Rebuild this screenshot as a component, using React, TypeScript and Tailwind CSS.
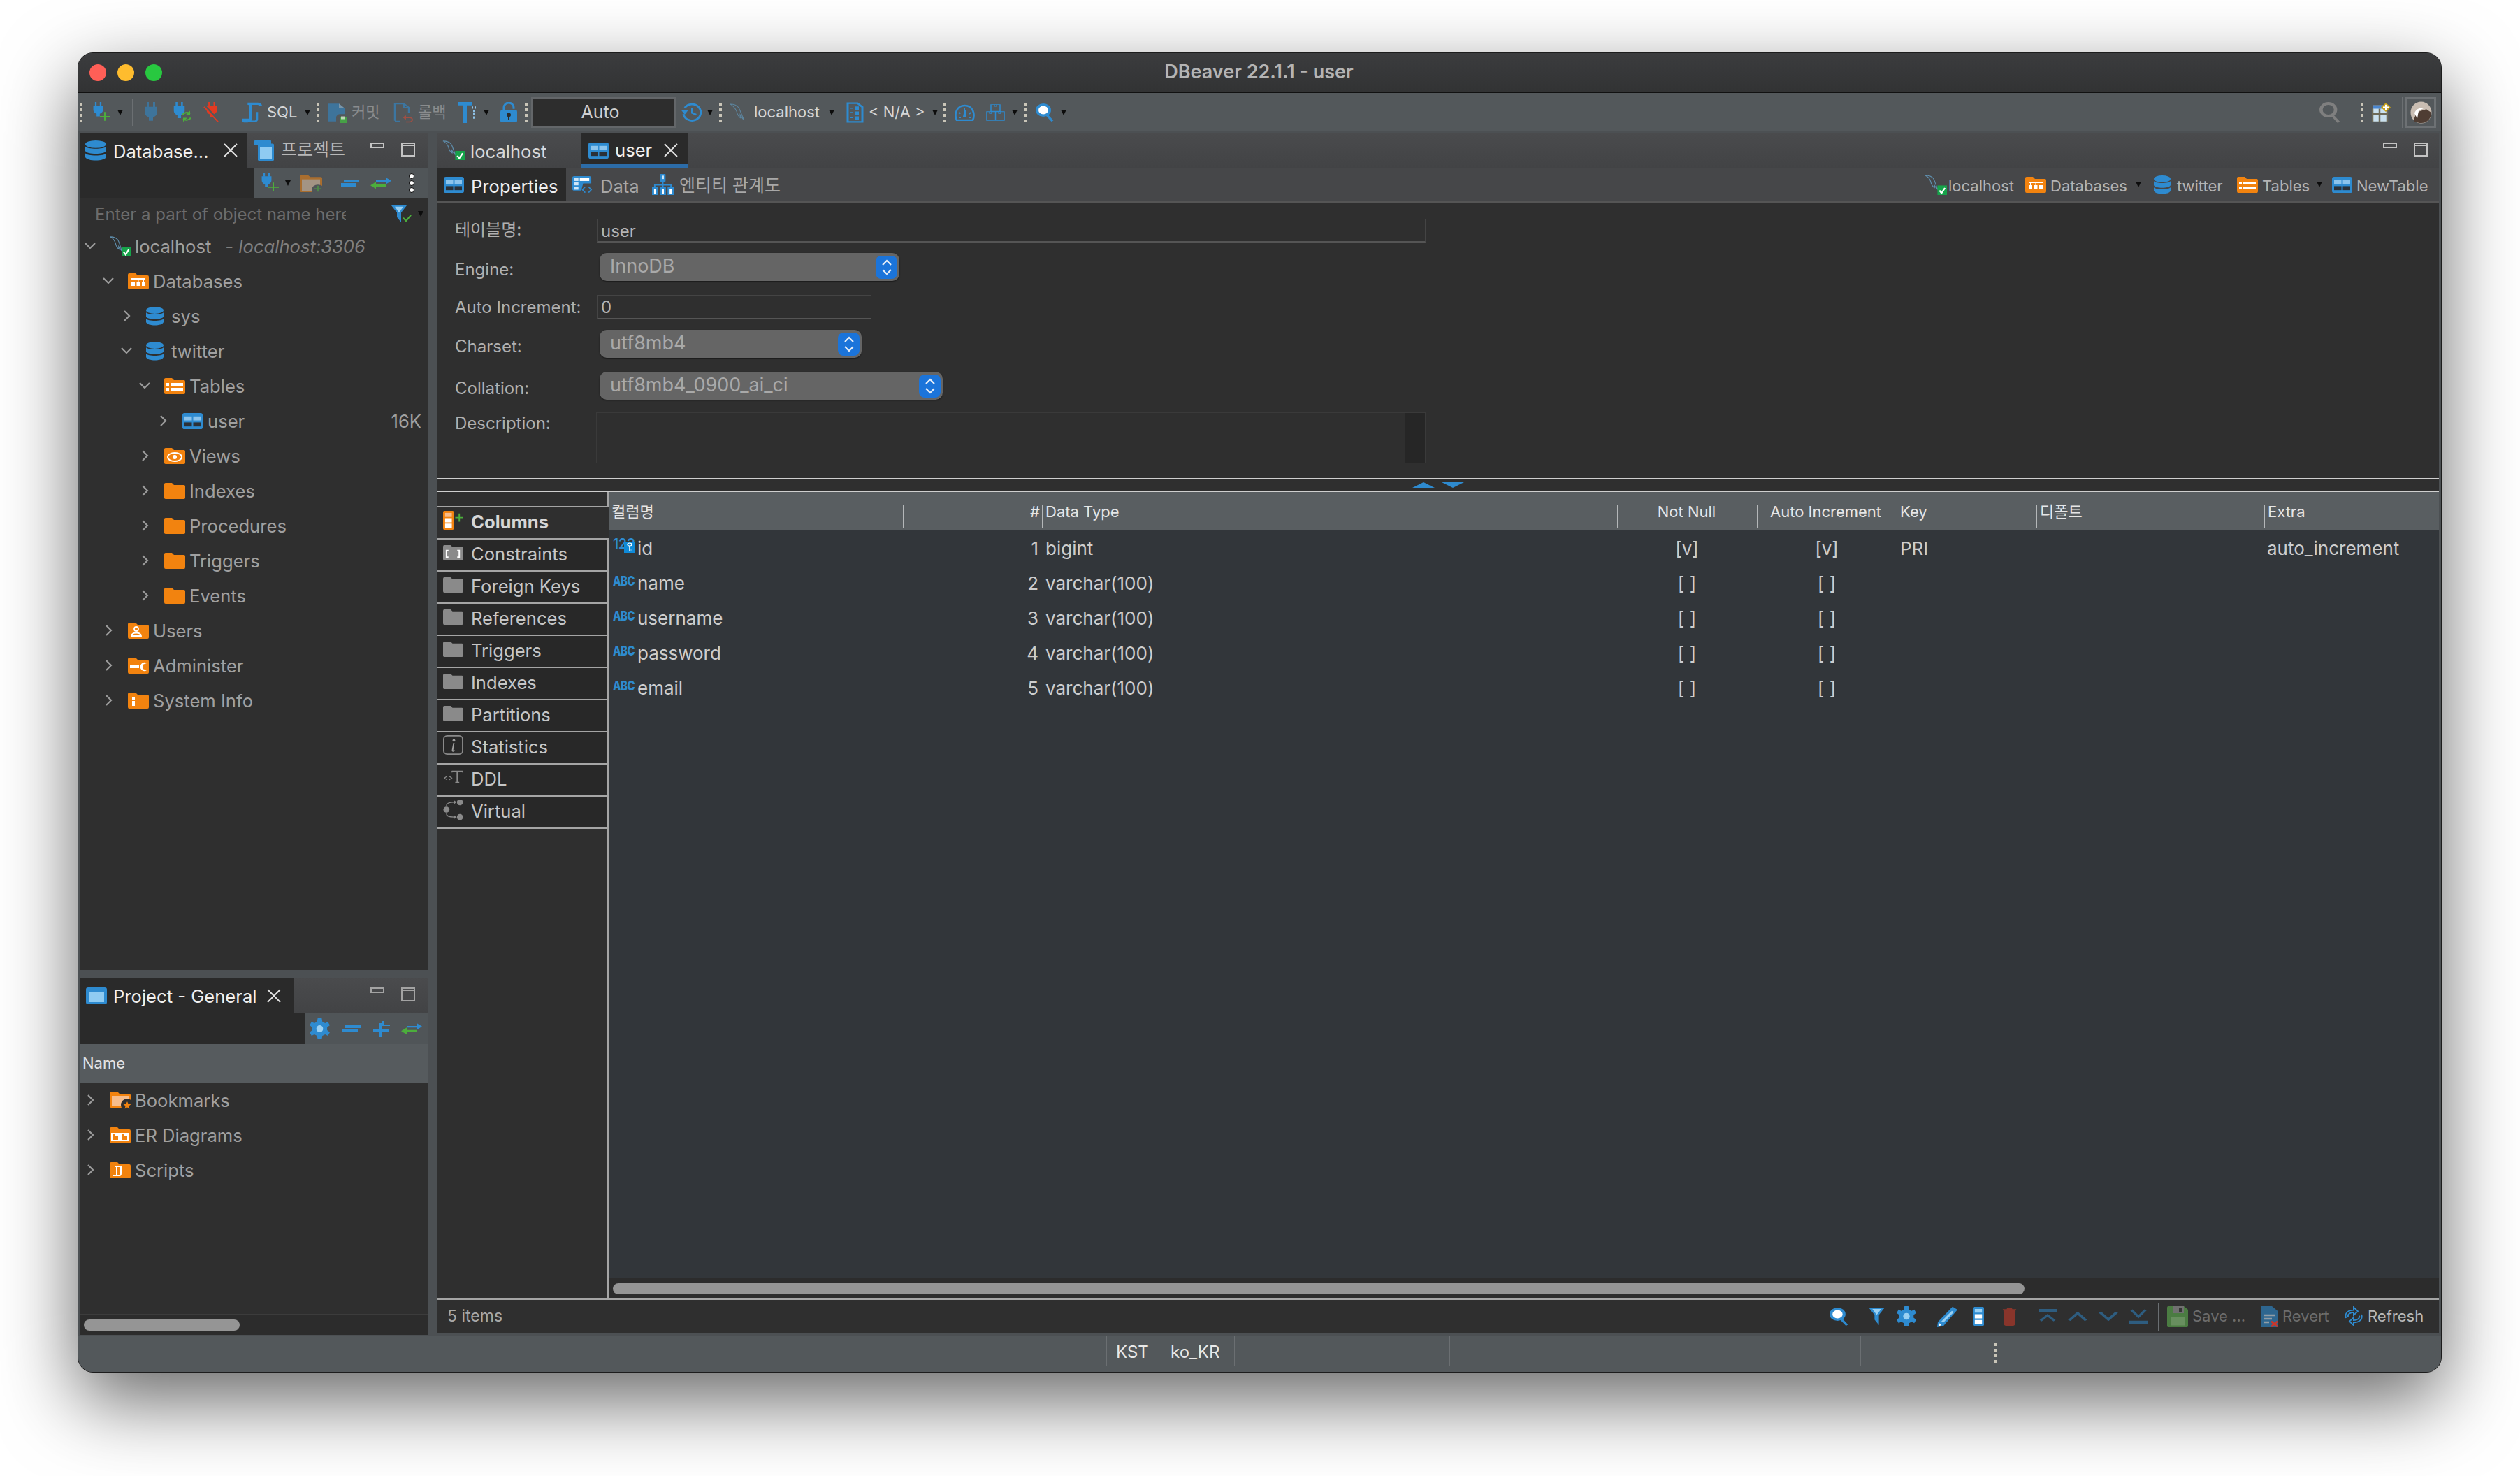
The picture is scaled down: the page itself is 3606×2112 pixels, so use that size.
import type { ReactNode } from 'react';

const BLUE = '#2e8bd0';
const ORANGE = '#f2830f';
const GREEN = '#4cae3c';

function Svg({ w, h = w, vb, cls = '', children }: { w: number; h?: number; vb: string; cls?: string; children: ReactNode }) {
  return (
    <svg width={w} height={h} viewBox={vb} preserveAspectRatio="none" className={`shrink-0 ${cls}`}>
      {children}
    </svg>
  );
}

function Grip({ cls = '' }: { cls?: string }) {
  return (
    <div className={`flex flex-col gap-[4px] w-[4px] shrink-0 ${cls}`}>
      <div className="h-[4px] bg-[#c9c5b8]" />
      <div className="h-[4px] bg-[#c9c5b8]" />
      <div className="h-[4px] bg-[#c9c5b8]" />
      <div className="h-[4px] bg-[#c9c5b8]" />
    </div>
  );
}

function Dd({ cls = '' }: { cls?: string }) {
  return (
    <Svg w={8} h={8} vb="0 0 8 8" cls={cls}>
      <path d="M0 0h8L4 8z" fill="#0c0c0c" />
    </Svg>
  );
}

function Sep({ cls = '' }: { cls?: string }) {
  return <div className={`w-px h-[40px] bg-[#6b6f72] shrink-0 ${cls}`} />;
}

function Plug({ w = 22, color = BLUE, opacity = 1 }: { w?: number; color?: string; opacity?: number }) {
  return (
    <g opacity={opacity} transform={`scale(${w / 22})`}>
      <path d="M5 0h3v9H5zM14 0h3v9h-3z" fill={color} />
      <path d="M2 8h18v9c0 5-3 8-6 9v6H8v-6c-3-1-6-4-6-9z" fill={color} />
    </g>
  );
}

function PlugAdd() {
  return (
    <Svg w={26} h={30} vb="0 0 26 36">
      <Plug w={17} />
      <path d="M18 17v15M11 25h15" stroke={GREEN} strokeWidth="2" fill="none" />
    </Svg>
  );
}

function PlugRefresh() {
  return (
    <Svg w={28} h={30} vb="0 0 28 36">
      <Plug w={19} />
      <path d="M14 22a7 7 0 0 1 11-2M26 27a7 7 0 0 1-11 2" stroke={GREEN} strokeWidth="2.4" fill="none" />
      <path d="M25 15v7h-6zM15 34v-7h6z" fill={GREEN} />
    </Svg>
  );
}

function PlugOff() {
  return (
    <Svg w={24} h={30} vb="0 0 24 36">
      <g transform="translate(3 0) scale(.82)">
        <Plug w={22} color="#e23a22" />
      </g>
      <path d="M2 6l20 26" stroke="#53585b" strokeWidth="3" />
      <path d="M1 8l20 26" stroke="#e23a22" strokeWidth="2" />
    </Svg>
  );
}

function ScriptIcon() {
  return (
    <Svg w={29} h={30} vb="0 0 28 38">
      <path d="M8 3h14a4 4 0 0 1 4 4M9 3c2 0 3 2 3 4v24a4 4 0 0 1-4 4H3a2 2 0 0 1-1-3h10" stroke={BLUE} strokeWidth="4" fill="none" />
      <path d="M8 35h10c2 0 3-2 3-4V18" stroke={BLUE} strokeWidth="3" fill="none" />
    </Svg>
  );
}

function CommitIcon() {
  return (
    <Svg w={28} h={30} vb="0 0 28 38">
      <g opacity=".55">
        <path d="M1 3h15l8 8v24H1z" fill={BLUE} />
        <path d="M16 3v8h8" fill="#9cc8e8" />
      </g>
      <path d="M12 36v-8a6 6 0 0 1 6-6h9v16H12z" fill="#53585b" />
      <path d="M17 28h10v10H17z" fill="#46a046" />
      <path d="M19 26h5v5h-5z" fill="#d6e6d0" opacity=".8" />
    </Svg>
  );
}

function RollbackIcon() {
  return (
    <Svg w={30} h={30} vb="0 0 30 38" cls="opacity-60">
      <path d="M2 34V3h13l7 7v10M15 3v7h7M2 35h8" stroke={BLUE} strokeWidth="2.5" fill="none" />
      <path d="M16 28h7a4 4 0 0 1 0 8h-5" stroke="#d24a35" strokeWidth="2" fill="none" />
      <path d="M18 24l-5 4 5 4z" fill="#d24a35" />
    </Svg>
  );
}

function TextIcon() {
  return (
    <Svg w={28} h={30} vb="0 0 28 38">
      <path d="M0 0h20v6h-7v32H8V6H0z" fill={BLUE} />
      <path d="M20 8h2v4h-2zM24 8h2v4h-2zM22 14h2v4h-2zM22 20h2v4h-2zM22 26h2v4h-2z" fill="#8fc1e6" />
    </Svg>
  );
}

function LockIcon() {
  return (
    <Svg w={24} h={29} vb="0 0 24 30">
      <path d="M5 14V8a7 7 0 0 1 14 0v2" stroke={BLUE} strokeWidth="3" fill="none" />
      <path d="M2 12h20a2 2 0 0 1 2 2v14a2 2 0 0 1-2 2H2a2 2 0 0 1-2-2V14a2 2 0 0 1 2-2z" fill={BLUE} />
      <circle cx="12" cy="19" r="3" fill="#2b2b2b" />
      <path d="M11 20h2v6h-2z" fill="#2b2b2b" />
    </Svg>
  );
}

function HistoryIcon() {
  return (
    <Svg w={29} h={27} vb="0 0 30 30">
      <path d="M5 8a13 13 0 1 1-2 10" stroke={BLUE} strokeWidth="3" fill="none" />
      <path d="M0 12h10L5 19z" fill={BLUE} />
      <path d="M16 8v8l6 3" stroke={BLUE} strokeWidth="3" fill="none" />
    </Svg>
  );
}

function Dolphin() {
  return (
    <Svg w={27} h={28} vb="0 0 27 28">
      <path d="M1 2c5 0 9 1 12 5 3 5 4 11 8 18-3-2-4-5-6-8 0 2 0 4 1 5-3-2-5-5-6-10C8 8 5 4 1 2z" fill="none" stroke="#5f8fae" strokeWidth="1.2" />
    </Svg>
  );
}

function DolphinOk({ w = 32, h = 29 }: { w?: number; h?: number }) {
  return (
    <Svg w={w} h={h} vb="0 0 33 32">
      <path d="M1 1c5 0 9 1 12 5 3 5 3 11 7 18-3-2-4-5-6-8 0 2 0 4 1 5-3-2-5-5-6-10C8 7 5 3 1 1z" fill="none" stroke="#5f8fae" strokeWidth="1.2" />
      <path d="M19 17h14v15H19z" fill="#16a34a" />
      <path d="M22 25l3 4 5-8" stroke="#fff" strokeWidth="2.4" fill="none" />
    </Svg>
  );
}

function FileIcon() {
  return (
    <Svg w={25} h={30} vb="0 0 25 38">
      <path d="M2 2h14l7 7v27H2z" stroke={BLUE} strokeWidth="3" fill="none" />
      <path d="M5 10h5v2H5zM13 8h5v6h-5zM5 18h5v2H5zM13 17h5v6h-5zM5 27h5v2H5zM13 26h5v6h-5z" fill={BLUE} />
    </Svg>
  );
}

function GaugeIcon() {
  return (
    <Svg w={31} h={24} vb="0 0 31 24">
      <path d="M4 23C0 14 4 2 15.500 2S31 14 27 23z" stroke={BLUE} strokeWidth="2.6" fill="none" />
      <path d="M16 9l-2 9h3zM7 12l2 2M24 12l-2 2M15 5v3M7 19h3M21 19h3" stroke={BLUE} strokeWidth="2" fill={BLUE} />
    </Svg>
  );
}

function BoxesIcon() {
  return (
    <Svg w={27} h={24} vb="0 0 27 38">
      <path d="M7 1h13v15H7zM1 17h12.500v20H1zM13.500 17H26v20H13.500z" stroke={BLUE} strokeWidth="1.5" fill="none" />
      <path d="M12 1v4h3V1M5 17v4h3v-4M18 17v4h3v-4" stroke={BLUE} strokeWidth="1.2" fill="none" />
    </Svg>
  );
}

function SearchIcon({ w = 26, h = 26, color = BLUE, fill = '#fff' }: { w?: number; h?: number; color?: string; fill?: string }) {
  return (
    <Svg w={w} h={h} vb="0 0 26 30">
      <ellipse cx="11" cy="11" rx="9" ry="9" fill={fill} stroke={color} strokeWidth="4" />
      <path d="M16 19l8 10" stroke={color} strokeWidth="3.500" />
    </Svg>
  );
}

function FilterIcon({ check = false, w = 32, h = 26 }: { check?: boolean; w?: number; h?: number }) {
  return (
    <Svg w={w} h={h} vb={check ? '0 0 32 28' : '0 0 24 28'}>
      <path d="M1 1h22L15 12v15l-6-8v-7z" fill={BLUE} />
      <path d="M6 3h12l-6 9z" fill="#9ad0f2" />
      {check && <path d="M18 20l4 5 7-9" stroke={GREEN} strokeWidth="2.2" fill="none" />}
    </Svg>
  );
}

function Collapse() {
  return (
    <Svg w={26} h={10} vb="0 0 26 10">
      <path d="M4 0h22v4h-2v0H4zM0 5h22v5H0z" fill={BLUE} />
    </Svg>
  );
}

function SwapArrows() {
  return (
    <Svg w={30} h={18} vb="0 0 30 22">
      <path d="M8 6h14V1l8 6-8 6V9H8z" fill={BLUE} />
      <path d="M22 13H8V9l-8 6 8 6v-4h14z" fill={GREEN} />
    </Svg>
  );
}

function Gear({ w = 28, h = 29 }: { w?: number; h?: number }) {
  return (
    <Svg w={w} h={h} vb="0 0 30 30">
      <path d="M12 0h6l1 5 4 2 4-2 3 5-4 3v4l4 3-3 5-4-2-4 2-1 5h-6l-1-5-4-2-4 2-3-5 4-3v-4L0 10l3-5 4 2 4-2z" fill={BLUE} />
      <circle cx="15" cy="15" r="5" fill="#9ad0f2" />
    </Svg>
  );
}

function TableBlue({ w = 29 }: { w?: number }) {
  return (
    <Svg w={w} h={Math.round(w * 0.8)} vb="0 0 29 24">
      <rect width="29" height="24" rx="3" fill={BLUE} />
      <rect x="3" y="5" width="10.500" height="6" fill="#8cc4ec" />
      <rect x="15.500" y="5" width="10.500" height="6" fill="#8cc4ec" />
      <rect x="3" y="14" width="10.500" height="6" fill="#2b3138" />
      <rect x="15.500" y="14" width="10.500" height="6" fill="#2b3138" />
    </Svg>
  );
}

function DataIcon() {
  return (
    <Svg w={29} h={25} vb="0 0 30 36">
      <rect width="28" height="30" rx="3" fill={BLUE} />
      <rect x="3" y="4" width="6" height="6" fill="#cfe6f7" />
      <rect x="11" y="4" width="14" height="6" fill="#fff" />
      <rect x="3" y="13" width="6" height="6" fill="#cfe6f7" />
      <rect x="3" y="22" width="6" height="6" fill="#cfe6f7" />
      <path d="M16 15h14v21H12z" fill="#464749" />
      <path d="M19 22l-4 6 4 6M24 22l4 6-4 6" stroke={BLUE} strokeWidth="2" fill="none" />
    </Svg>
  );
}

function ErdIcon() {
  return (
    <Svg w={31} h={30} vb="0 0 32 38">
      <rect x="12" y="0" width="8" height="14" rx="1" fill={BLUE} />
      <rect x="14.500" y="3" width="3" height="6" fill="#cfe6f7" />
      <path d="M16 14v6M4 24v-4h24v4M16 20v4" stroke={BLUE} strokeWidth="2" fill="none" />
      <path d="M0 24h9v14H0zM11.500 24h9v14h-9zM23 24h9v14h-9z" fill={BLUE} />
      <path d="M3 28h3v8H3zM14.500 28h3v8h-3zM26 28h3v8h-3z" fill="#fff" />
    </Svg>
  );
}

function Db({ w = 25, h = 27 }: { w?: number; h?: number }) {
  return (
    <Svg w={w} h={h} vb="0 0 25 27">
      <ellipse cx="12.500" cy="5" rx="12.500" ry="5" fill={BLUE} />
      <path d="M0 8c2 4 23 4 25 0v6c-2 5-23 5-25 0z" fill={BLUE} />
      <path d="M0 17c2 4 23 4 25 0v5c-2 6-23 6-25 0z" fill={BLUE} />
    </Svg>
  );
}

const FOLDER = 'M0 3a2 2 0 0 1 2-2h9l3 3h14a2 2 0 0 1 2 2v16a2 2 0 0 1-2 2H2a2 2 0 0 1-2-2z';

function Folder({ w = 30, h = 24, color = ORANGE, children }: { w?: number; h?: number; color?: string; children?: ReactNode }) {
  return (
    <Svg w={w} h={h} vb="0 0 30 24">
      <path d={FOLDER} fill={color} />
      {children}
    </Svg>
  );
}

const DatabasesIcon = () => (
  <Folder>
    <path d="M5 8h20v2H5zM5 13h5v6H5zM12.500 13h5v6h-5zM20 13h5v6h-5z" fill="#fff" />
    <path d="M7 10h1v3H7zM14.500 10h1v3h-1zM22 10h1v3h-1z" fill="#fff" />
  </Folder>
);
const TablesIcon = () => (
  <Folder>
    <path d="M3 8h4v4H3zM9 8h18v4H9zM3 15h4v4H3zM9 15h18v4H9z" fill="#fff" />
  </Folder>
);
const ViewsIcon = () => (
  <Folder>
    <ellipse cx="15" cy="14" rx="10" ry="6" fill="none" stroke="#fff" strokeWidth="2" />
    <circle cx="15" cy="14" r="3" fill="#fff" />
  </Folder>
);
const UsersIcon = () => (
  <Folder>
    <circle cx="12" cy="10" r="3" fill="none" stroke="#fff" strokeWidth="1.800" />
    <path d="M5 20c0-6 14-6 14 0z" fill="none" stroke="#fff" strokeWidth="1.800" />
  </Folder>
);
const AdminIcon = () => (
  <Folder>
    <path d="M3 12h13v4H3z" fill="#fff" />
    <path d="M27 9a6 6 0 1 0 0 10l-6-2v-6z" fill="#fff" />
  </Folder>
);
const InfoIcon = () => (
  <Folder>
    <path d="M6 8h4v3H6zM6 13h4v7H6z" fill="#fff" />
  </Folder>
);
const BookmarksIcon = () => (
  <Svg w={32} h={26} vb="0 0 32 26">
    <path d={FOLDER} fill={ORANGE} />
    <path d="M3 7h24v14H3z" fill="#f7bd8c" />
    <circle cx="25" cy="20" r="9" fill="#2f2f2f" />
    <path d="M25 15l1.600 3.600 3.900.4-3 2.600.9 3.800-3.400-2-3.400 2 .9-3.800-3-2.600 3.900-.4z" fill={ORANGE} />
  </Svg>
);
const ErIcon = () => (
  <Folder>
    <path d="M3 10h10v10H3zM16 10h10v10H16z" fill="none" stroke="#fff" strokeWidth="2" />
    <path d="M8 9h5v4H8zM21 9h5v4h-5z" fill="#fff" />
  </Folder>
);
const ScriptsIcon = () => (
  <Folder>
    <path d="M8 7h10M10 7v12M5 20h9c2 0 2-2 2-3V8" fill="none" stroke="#fff" strokeWidth="2" />
  </Folder>
);

function Chev({ open }: { open: boolean }) {
  return (
    <Svg w={16} h={16} vb="0 0 16 16">
      {open ? (
        <path d="M1 4l7 7 7-7" stroke="#9b9b9b" strokeWidth="2.200" fill="none" />
      ) : (
        <path d="M5 1l7 7-7 7" stroke="#9b9b9b" strokeWidth="2.200" fill="none" />
      )}
    </Svg>
  );
}

function MinMax({ cls = '', dim = false }: { cls?: string; dim?: boolean }) {
  const c = dim ? 'border-[#a3a3a3]' : 'border-[#c4c4c4]';
  return (
    <div className={`flex shrink-0 ${cls}`}>
      <div className={`w-[20px] h-[8px] border-2 ${c}`} />
      <div className={`ml-[24px] w-[20px] h-[20px] border-2 ${c} flex flex-col`}>
        <div className={`h-[3px] border-b-2 ${c}`} />
      </div>
    </div>
  );
}

function CloseX({ cls = '' }: { cls?: string }) {
  return (
    <Svg w={20} h={20} vb="0 0 20 20" cls={cls}>
      <path d="M1 1l18 18M19 1L1 19" stroke="#e6e6e6" strokeWidth="1.800" />
    </Svg>
  );
}

const INDENT = ['pl-[7px]', 'pl-[33px]', 'pl-[59px]', 'pl-[85px]', 'pl-[111px]'];

function TreeRow({ level, open, icon, label, note, right }: { level: number; open?: boolean; icon: ReactNode; label: string; note?: string; right?: string }) {
  return (
    <div className={`flex items-center h-[50px] text-[25.6px] text-[#a0a0a0] ${INDENT[level]}`}>
      <Chev open={!!open} />
      <div className="ml-[20px] w-[36px] flex items-center shrink-0">{icon}</div>
      <span className="whitespace-nowrap pt-[2px]">{label}</span>
      {note && <span className="ml-[20px] pt-[2px] italic text-[#7f7f7f] whitespace-nowrap">- {note}</span>}
      {right && <span className="ml-auto pr-[9px] pt-[2px]">{right}</span>}
    </div>
  );
}

function DatabasePane() {
  return (
    <div className="h-[1198px] flex flex-col bg-[#2f2f2f] shrink-0">
      <div className="h-[50px] flex bg-gradient-to-b from-[#4a4b4d] to-[#424345] shrink-0">
        <div className="w-[240px] bg-[#2a2a2a] flex items-center pl-[8px] text-[25.6px] text-[#f0f0f0]">
          <Db w={30} h={29} />
          <span className="ml-[10px] w-[136px] whitespace-nowrap pt-[4px]">Database...</span>
          <CloseX cls="ml-[22px]" />
        </div>
        <div className="flex items-center pl-[10px] text-[25px] text-[#b8b8b8] flex-1">
          <Svg w={28} h={30} vb="0 0 28 38">
            <path d="M0 3a3 3 0 0 1 3-3h18a3 3 0 0 1 3 3v6H0z" fill={BLUE} />
            <rect x="5" y="7" width="23" height="31" rx="2" fill={BLUE} />
            <rect x="8" y="13" width="17" height="22" fill="#8fcbf2" />
          </Svg>
          <span className="ml-[10px] w-[88px] whitespace-nowrap">프로젝트</span>
          <MinMax cls="ml-[40px] self-start mt-[14px]" />
        </div>
      </div>
      <div className="h-[44px] flex shrink-0">
        <div className="w-[250px] bg-[#2a2a2a]" />
        <div className="flex-1 bg-[#505558] flex items-center">
          <div className="ml-[9px]"><PlugAdd /></div>
          <Dd cls="ml-[9px]" />
          <Svg w={32} h={25} vb="0 0 32 30" cls="ml-[13px] opacity-55">
            <path d="M0 3a2 2 0 0 1 2-2h10l3 3h15a2 2 0 0 1 2 2v22a2 2 0 0 1-2 2H2a2 2 0 0 1-2-2z" fill={ORANGE} />
            <path d="M3 8h26v20H3z" fill="#e8c8a8" />
            <circle cx="26" cy="26" r="9" fill="#505558" />
            <path d="M26 19v10M21 24h10" stroke={GREEN} strokeWidth="2" />
          </Svg>
          <div className="ml-[12px] w-px h-[44px] bg-[#6b6f72]" />
          <div className="ml-[14px]"><Collapse /></div>
          <div className="ml-[16px]"><SwapArrows /></div>
          <div className="ml-[25px] flex flex-col gap-[2px]">
            <div className="w-[8px] h-[8px] rounded-full bg-white border border-black" />
            <div className="w-[8px] h-[8px] rounded-full bg-white border border-black" />
            <div className="w-[8px] h-[8px] rounded-full bg-white border border-black" />
          </div>
        </div>
      </div>
      <div className="h-[43px] flex items-center shrink-0 pl-[22px] text-[24px] text-[#6c6c6c]">
        <span className="w-[359px] overflow-hidden whitespace-nowrap pt-[2px]">Enter a part of object name here</span>
        <div className="ml-[64px]"><FilterIcon check /></div>
        <Dd cls="ml-[7px]" />
      </div>
      <TreeRow level={0} open icon={<DolphinOk w={30} />} label="localhost" note="localhost:3306" />
      <TreeRow level={1} open icon={<DatabasesIcon />} label="Databases" />
      <TreeRow level={2} icon={<Db />} label="sys" />
      <TreeRow level={2} open icon={<Db />} label="twitter" />
      <TreeRow level={3} open icon={<TablesIcon />} label="Tables" />
      <TreeRow level={4} icon={<TableBlue />} label="user" right="16K" />
      <TreeRow level={3} icon={<ViewsIcon />} label="Views" />
      <TreeRow level={3} icon={<Folder />} label="Indexes" />
      <TreeRow level={3} icon={<Folder />} label="Procedures" />
      <TreeRow level={3} icon={<Folder />} label="Triggers" />
      <TreeRow level={3} icon={<Folder />} label="Events" />
      <TreeRow level={1} icon={<UsersIcon />} label="Users" />
      <TreeRow level={1} icon={<AdminIcon />} label="Administer" />
      <TreeRow level={1} icon={<InfoIcon />} label="System Info" />
    </div>
  );
}

function ProjectPane() {
  return (
    <div className="flex-1 flex flex-col bg-[#2f2f2f] mt-[11px] mb-[1px]">
      <div className="h-[51px] flex bg-gradient-to-b from-[#4a4b4d] to-[#424345] shrink-0">
        <div className="w-[306px] bg-[#2a2a2a] flex items-center pl-[9px] text-[25.6px] text-[#f0f0f0]">
          <Svg w={30} h={24} vb="0 0 30 24">
            <rect width="30" height="24" rx="3" fill={BLUE} />
            <rect x="4" y="6" width="22" height="15" fill="#8fcbf2" />
          </Svg>
          <span className="ml-[9px] w-[204px] whitespace-nowrap pt-[4px]">Project - General</span>
          <CloseX cls="ml-[16px]" />
        </div>
        <MinMax cls="ml-[110px] mt-[14px] self-start" dim />
      </div>
      <div className="h-[44px] flex shrink-0">
        <div className="w-[322px] bg-[#2a2a2a]" />
        <div className="flex-1 bg-[#505558] flex items-center">
          <div className="ml-[7px]"><Gear w={29} h={30} /></div>
          <div className="ml-[18px]"><Collapse /></div>
          <Svg w={26} h={24} vb="0 0 26 24" cls="ml-[18px]">
            <path d="M0 12h22v4H0zM9 4h4v20H9z" fill={BLUE} />
            <path d="M14 1v6h10" stroke={BLUE} strokeWidth="2" fill="none" />
          </Svg>
          <div className="ml-[14px]"><SwapArrows /></div>
        </div>
      </div>
      <div className="h-[55px] bg-[#565b5e] flex items-center pl-[4px] text-[22px] text-[#e4e4e4] shrink-0">Name</div>
      <TreeRow level={0} icon={<BookmarksIcon />} label="Bookmarks" />
      <TreeRow level={0} icon={<ErIcon />} label="ER Diagrams" />
      <TreeRow level={0} icon={<ScriptsIcon />} label="Scripts" />
      <div className="mt-auto h-[30px] border-t border-[#3c3c3c] bg-[#2c2c2c] pt-[7px] pl-[6px]">
        <div className="w-[223px] h-[16px] rounded-full bg-[#959595]" />
      </div>
    </div>
  );
}

function Select({ label, cls, text, mt }: { label: string; cls: string; text: string; mt: string }) {
  return (
    <div className={`flex items-center h-[40px] ${mt}`}>
      <span className="w-[207px] mt-[8px] text-[#b0b0b0]">{label}</span>
      <div className={`h-[40px] rounded-[10px] bg-[#656565] flex items-center justify-between pl-[15px] pr-[3px] text-[27px] text-[#a9a9a9] shadow-[0_1px_2px_rgba(0,0,0,.5)] ${cls}`}>
        <span className="-mt-[2px]">{text}</span>
        <div className="w-[31px] h-[33px] rounded-[8px] bg-[#1b74da] flex items-center justify-center">
          <Svg w={16} h={25} vb="0 0 16 25">
            <path d="M2 9l6-6 6 6M2 16l6 6 6-6" stroke="#e6eef8" strokeWidth="2.200" fill="none" />
          </Svg>
        </div>
      </div>
    </div>
  );
}

function FormPanel() {
  return (
    <div className="h-[394px] pl-[25px] pt-[23px] flex flex-col text-[24px] shrink-0">
      <div className="flex h-[34px] items-center">
        <span className="w-[203px] -mt-[2px] text-[#b0b0b0]">테이블명:</span>
        <div className="w-[1186px] h-[34px] border border-[#444] border-b-2 border-b-[#555] pl-[5px] pt-[2px] flex items-center text-[#b5b5b5]">user</div>
      </div>
      <Select mt="mt-[15px]" label="Engine:" cls="w-[429px]" text="InnoDB" />
      <div className="flex h-[35px] items-center mt-[20px]">
        <span className="w-[203px] text-[#b0b0b0] mt-[1px]">Auto Increment:</span>
        <div className="w-[393px] h-[35px] border border-[#444] border-b-2 border-b-[#555] pl-[5px] pt-[2px] flex items-center text-[#b5b5b5]">0</div>
      </div>
      <Select mt="mt-[15px]" label="Charset:" cls="w-[375px]" text="utf8mb4" />
      <Select mt="mt-[20px]" label="Collation:" cls="w-[491px]" text="utf8mb4_0900_ai_ci" />
      <div className="flex mt-[18px]">
        <span className="w-[202px] h-[40px] -mt-[2px] text-[#b0b0b0]">Description:</span>
        <div className="w-[1187px] h-[73px] border border-[#3a3a3a] flex justify-end">
          <div className="w-[28px] bg-[#262626]" />
        </div>
      </div>
    </div>
  );
}

function TabItem({ icon, label, active }: { icon: ReactNode; label: string; active?: boolean }) {
  return (
    <div className={`h-[46px] w-[245px] border-t-2 border-[#a5a5a5] flex items-center pl-[8px] pb-[2px] text-[25.6px] ${active ? 'bg-[#2f2f2f] text-[#d6d6d6] font-bold' : 'bg-[#282828] text-[#c6c6c6] border-r-2'}`}>
      <div className="w-[40px] -mt-[6px] shrink-0 flex">{icon}</div>
      <span className="whitespace-nowrap">{label}</span>
    </div>
  );
}

const COLS = 'grid grid-cols-[421px_199px_823px_200px_200px_200px_326px_251px]';

const ROWS: { icon: 'num' | 'abc'; name: string; n: number; type: string; nn: string; ai: string; key?: string; extra?: string }[] = [
  { icon: 'num', name: 'id', n: 1, type: 'bigint', nn: '[v]', ai: '[v]', key: 'PRI', extra: 'auto_increment' },
  { icon: 'abc', name: 'name', n: 2, type: 'varchar(100)', nn: '[ ]', ai: '[ ]' },
  { icon: 'abc', name: 'username', n: 3, type: 'varchar(100)', nn: '[ ]', ai: '[ ]' },
  { icon: 'abc', name: 'password', n: 4, type: 'varchar(100)', nn: '[ ]', ai: '[ ]' },
  { icon: 'abc', name: 'email', n: 5, type: 'varchar(100)', nn: '[ ]', ai: '[ ]' },
];

function HeadCell({ children, cls = '' }: { children?: ReactNode; cls?: string }) {
  return <div className={`h-[34px] border-l-[1.5px] border-[#b4b7b9] pl-[4px] whitespace-nowrap leading-[20px] ${cls}`}>{children}</div>;
}

function ColumnsTable() {
  return (
    <div className="flex-1 flex flex-col bg-[#32363a] min-w-0">
      <div className={`h-[55px] bg-[#595e61] pt-[18px] text-[22px] text-[#e6e6e6] shrink-0 ${COLS}`}>
        <div className="h-[34px] pl-[4px] leading-[20px]">컬럼명</div>
        <HeadCell cls="text-right pr-[3px]">#</HeadCell>
        <HeadCell>Data Type</HeadCell>
        <HeadCell cls="text-center pr-[6px]">Not Null</HeadCell>
        <HeadCell cls="text-center pr-[8px]">Auto Increment</HeadCell>
        <HeadCell>Key</HeadCell>
        <HeadCell>디폴트</HeadCell>
        <HeadCell>Extra</HeadCell>
      </div>
      <div className="text-[26px] text-[#cdcdcd]">
        {ROWS.map((r) => (
          <div key={r.name} className={`h-[50px] items-center ${COLS}`}>
            <div className="flex items-center pl-[6px]">
              {r.icon === 'abc' ? (
                <span className="w-[35px] -mt-[6px] text-[15px] leading-none font-extrabold text-[#2e8bd0] tracking-[-0.5px] origin-left scale-y-[1.25] shrink-0">ABC</span>
              ) : (
                <span className="w-[35px] -mt-[12px] text-[20px] leading-none font-medium text-[#2e8bd0] tracking-[-0.5px] shrink-0 relative">
                  123
                  <Svg w={16} h={16} vb="0 0 16 24" cls="absolute left-[16px] top-[7px]">
                    <rect width="16" height="24" fill="#0f8ad8" />
                    <circle cx="8" cy="6" r="3" fill="none" stroke="#fff" strokeWidth="1.500" />
                    <path d="M8 9v12M8 16h3M8 20h3" stroke="#fff" strokeWidth="1.500" />
                  </Svg>
                </span>
              )}
              <span>{r.name}</span>
            </div>
            <div className="text-right pr-[5px]">{r.n}</div>
            <div className="pl-[5px]">{r.type}</div>
            <div className="text-center">{r.nn}</div>
            <div className="text-center">{r.ai}</div>
            <div className="pl-[5px]">{r.key}</div>
            <div />
            <div className="pl-[4px]">{r.extra}</div>
          </div>
        ))}
      </div>
      <div className="mt-auto h-[30px] bg-[#2c2c2c] border-t border-[#3c3c3c] pt-[7px] pl-[6px] shrink-0">
        <div className="w-[2020px] h-[16px] rounded-full bg-[#959595]" />
      </div>
    </div>
  );
}

function FolderGray() {
  return <Folder w={29} h={23} color="#8a8a8a" />;
}

function BottomBar() {
  return (
    <div className="h-[47px] flex items-center bg-[#2f2f2f] text-[22px] shrink-0">
      <span className="ml-[14px] text-[#a8a8a8] text-[23px]">5 items</span>
      <div className="ml-auto flex items-center">
        <SearchIcon w={27} h={26} />
        <div className="ml-[28px]"><FilterIcon w={25} h={27} /></div>
        <div className="ml-[16px]"><Gear /></div>
        <Sep cls="ml-[18px]" />
        <Svg w={30} h={30} vb="0 0 30 36" cls="ml-[11px]">
          <path d="M22 1l7 5L9 34l-9 2 1-9z" fill={BLUE} />
          <path d="M21 8l3 2L9 28l-3-2z" fill="#9ad0f2" />
          <path d="M2 35l1-6 3 3z" fill="#fff" />
        </Svg>
        <Svg w={16} h={27} vb="0 0 17 36" cls="ml-[21px]">
          <rect width="17" height="36" rx="2" fill={BLUE} />
          <rect x="3" y="4" width="11" height="7" fill="#9ad0f2" />
          <rect x="3" y="14" width="11" height="8" fill="#fff" />
          <rect x="3" y="25" width="11" height="8" fill="#fff" />
        </Svg>
        <Svg w={21} h={27} vb="0 0 23 34" cls="ml-[26px] opacity-55">
          <path d="M2 6h19l-1 25a3 3 0 0 1-3 3H6a3 3 0 0 1-3-3zM8 2h7l1 2h6v2H1V4h6z" fill="#d33b28" />
        </Svg>
        <Sep cls="ml-[17px]" />
        <Svg w={26} h={21} vb="0 0 26 30" cls="ml-[13px] opacity-50">
          <path d="M0 0h26v4H0zM3 24l10-11 10 11" fill="none" stroke={BLUE} strokeWidth="4" />
        </Svg>
        <Svg w={28} h={13} vb="0 0 28 20" cls="ml-[16px] opacity-50"><path d="M2 19L14 3l12 16" fill="none" stroke={BLUE} strokeWidth="4.500" /></Svg>
        <Svg w={28} h={13} vb="0 0 28 20" cls="ml-[16px] opacity-50"><path d="M2 1l12 16L26 1" fill="none" stroke={BLUE} strokeWidth="4.500" /></Svg>
        <Svg w={26} h={21} vb="0 0 26 30" cls="ml-[16px] opacity-50">
          <path d="M0 26h26v4H0zM3 2l10 14L23 2" fill="none" stroke={BLUE} strokeWidth="4" />
        </Svg>
        <Sep cls="ml-[15px]" />
        <Svg w={30} h={30} vb="0 0 30 36" cls="ml-[12px] opacity-60">
          <path d="M0 2a2 2 0 0 1 2-2h22l6 6v28a2 2 0 0 1-2 2H2a2 2 0 0 1-2-2z" fill="#5fb04f" />
          <path d="M8 0h16v12H8z" fill="#9c9c9c" />
          <path d="M17 3h4v7h-4z" fill="#3c3c3c" />
          <path d="M5 18h20v15H5z" fill="#8fd07f" />
        </Svg>
        <span className="ml-[6px] w-[76px] whitespace-nowrap text-[#6c6c6c]">Save ...</span>
        <Svg w={26} h={30} vb="0 0 26 36" cls="ml-[22px]">
          <g opacity=".6">
            <path d="M0 0h16l9 9v27H0z" fill={BLUE} />
            <path d="M4 14h16v3H4zM4 20h12v3H4zM4 26h8v3H4z" fill="#d5e8f6" />
          </g>
          <path d="M15 26l9 9M24 26l-9 9" stroke="#c9362a" strokeWidth="3" />
        </Svg>
        <span className="ml-[5px] w-[68px] whitespace-nowrap text-[#6c6c6c]">Revert</span>
        <Svg w={28} h={29} vb="0 0 28 36" cls="ml-[20px]">
          <path d="M3 21C0 11 8 7 14 7V2l6 7-6 7v-5c-5 0-9 3-8 8M25 15c3 10-5 14-11 14v5l-6-7 6-7v5c5 0 9-3 8-8" fill="none" stroke={BLUE} strokeWidth="2" />
        </Svg>
        <span className="ml-[6px] w-[81px] mr-[21px] whitespace-nowrap text-[#b8b8b8]">Refresh</span>
      </div>
    </div>
  );
}

function EditorPane() {
  return (
    <div className="w-[2864px] h-[1717px] flex flex-col shrink-0 mt-[2px]">
      <div className="h-[50px] flex bg-gradient-to-b from-[#4a4b4d] to-[#424345] shrink-0">
        <div className="w-[206px] flex items-center pl-[7px] text-[25.6px] text-[#d8d8d8]">
          <DolphinOk h={28} />
          <span className="ml-[8px] whitespace-nowrap pt-[4px]">localhost</span>
        </div>
        <div className="w-[152px] bg-[#2a2a2a] border-b-[6px] border-[#2c6ca8] flex items-center pl-[10px] text-[25.6px] text-[#f0f0f0] pt-[6px]">
          <TableBlue w={29} />
          <span className="ml-[9px] w-[54px]">user</span>
          <CloseX cls="ml-[16px]" />
        </div>
        <MinMax cls="ml-auto mr-[16px] mt-[14px] self-start" />
      </div>
      <div className="h-[50px] flex items-center bg-[#464749] border-b-2 border-[#555] shrink-0 text-[25.6px]">
        <div className="w-[184px] h-full bg-[#2a2a2a] flex items-center pl-[9px] text-[#f0f0f0]">
          <TableBlue w={29} />
          <span className="ml-[10px] whitespace-nowrap pt-[7px]">Properties</span>
        </div>
        <div className="ml-[9px]"><DataIcon /></div>
        <span className="ml-[11px] w-[55px] text-[#a8a8a8] pt-[7px]">Data</span>
        <div className="ml-[19px]"><ErdIcon /></div>
        <span className="ml-[8px] whitespace-nowrap text-[25px] text-[#a8a8a8] pt-[4px]">엔티티 관계도</span>
        <div className="ml-auto flex items-center text-[22px] text-[#b4b4b4] pr-[19px]">
          <DolphinOk />
          <span className="ml-[2px] w-[94px] whitespace-nowrap pt-[4px]">localhost</span>
          <div className="ml-[16px]"><DatabasesIcon /></div>
          <span className="ml-[6px] w-[110px] whitespace-nowrap pt-[4px]">Databases</span>
          <Dd cls="ml-[12px]" />
          <div className="ml-[18px]"><Db h={27} w={24} /></div>
          <span className="ml-[9px] w-[67px] whitespace-nowrap pt-[4px]">twitter</span>
          <div className="ml-[19px]"><TablesIcon /></div>
          <span className="ml-[6px] w-[66px] whitespace-nowrap pt-[4px]">Tables</span>
          <Dd cls="ml-[12px]" />
          <div className="ml-[14px]"><TableBlue /></div>
          <span className="ml-[6px] w-[99px] whitespace-nowrap pt-[4px]">NewTable</span>
        </div>
      </div>
      <div className="flex-1 flex flex-col bg-[#2f2f2f] min-h-0">
        <FormPanel />
        <div className="h-[20px] border-y-2 border-[#cfcfcf] flex items-center pl-[1395px] gap-[10px] shrink-0">
          <Svg w={32} h={8} vb="0 0 32 8"><path d="M0 8L16 0l16 8z" fill={BLUE} /></Svg>
          <Svg w={32} h={8} vb="0 0 32 8"><path d="M0 0h32L16 8z" fill={BLUE} /></Svg>
        </div>
        <div className="flex-1 flex min-h-0">
          <div className="w-[245px] flex flex-col shrink-0">
            <div className="h-[20px] border-r-2 border-[#a5a5a5]" />
            <TabItem active label="Columns" icon={
              <Svg w={29} h={27} vb="0 0 30 28">
                <rect width="16" height="28" rx="2" fill={ORANGE} />
                <path d="M3 3h10v6H3z" fill="#f7bd8c" />
                <path d="M3 11h10v6H3zM3 19h10v6H3z" fill="#fff" />
                <path d="M24 4v12M18 10h12" stroke={GREEN} strokeWidth="2" />
              </Svg>
            } />
            <TabItem label="Constraints" icon={<Folder w={29} h={23} color="#8a8a8a"><path d="M8 9H5v10h3M21 9h3v10h-3" fill="none" stroke="#fff" strokeWidth="2" /></Folder>} />
            <TabItem label="Foreign Keys" icon={<FolderGray />} />
            <TabItem label="References" icon={<FolderGray />} />
            <TabItem label="Triggers" icon={<FolderGray />} />
            <TabItem label="Indexes" icon={<FolderGray />} />
            <TabItem label="Partitions" icon={<FolderGray />} />
            <TabItem label="Statistics" icon={
              <Svg w={29} h={28} vb="0 0 30 30">
                <rect x="1" y="1" width="28" height="28" rx="5" fill="none" stroke="#8a8a8a" strokeWidth="2" />
                <circle cx="16" cy="8" r="2" fill="#a0a0a0" />
                <path d="M16 12l-2 11c0 2 1 2 3 0" fill="none" stroke="#a0a0a0" strokeWidth="2" />
              </Svg>
            } />
            <TabItem label="DDL" icon={
              <Svg w={29} h={20} vb="0 0 30 30">
                <path d="M6 13l-4 4 4 4M9 13l4 4-4 4" fill="none" stroke="#8a8a8a" strokeWidth="1.500" />
                <path d="M13 2h16M21 2v24M18 26h6M13 2v3M29 2v3" fill="none" stroke="#8a8a8a" strokeWidth="2" />
              </Svg>
            } />
            <TabItem label="Virtual" icon={
              <Svg w={29} h={29} vb="0 0 30 30">
                <circle cx="25" cy="4" r="4.500" fill="#8a8a8a" />
                <circle cx="5" cy="15" r="4.500" fill="#8a8a8a" />
                <circle cx="25" cy="26" r="4.500" fill="#8a8a8a" />
                <path d="M5 9c0-3 3-5 11-5M5 21c0 3 3 5 11 5" fill="none" stroke="#8a8a8a" strokeWidth="1.500" />
                <path d="M16 1l4 3-4 3zM16 23l4 3-4 3z" fill="#8a8a8a" />
              </Svg>
            } />
            <div className="flex-1 border-t-2 border-r-2 border-[#a5a5a5]" />
          </div>
          <ColumnsTable />
        </div>
        <div className="h-[2px] bg-[#a5a5a5] shrink-0" />
        <BottomBar />
      </div>
    </div>
  );
}

function MainToolbar() {
  return (
    <div className="h-[55px] bg-[#53585b] flex items-center text-[22px] text-[#d6d6d6] shrink-0">
      <Grip cls="ml-[2px]" />
      <div className="ml-[14px]"><PlugAdd /></div>
      <Dd cls="ml-[10px]" />
      <Sep cls="ml-[13px]" />
      <Svg w={22} h={30} vb="0 0 22 36" cls="ml-[15px]"><Plug w={22} opacity={0.55} /></Svg>
      <div className="ml-[20px]"><PlugRefresh /></div>
      <div className="ml-[16px]"><PlugOff /></div>
      <Sep cls="ml-[18px]" />
      <div className="ml-[12px]"><ScriptIcon /></div>
      <span className="ml-[7px] w-[42px]">SQL</span>
      <Dd cls="ml-[12px]" />
      <Grip cls="ml-[9px]" />
      <div className="ml-[12px]"><CommitIcon /></div>
      <span className="ml-[6px] w-[40px] whitespace-nowrap text-[#8a8c8e]">커밋</span>
      <div className="ml-[20px]"><RollbackIcon /></div>
      <span className="ml-[5px] w-[37px] whitespace-nowrap text-[#8a8c8e]">롤백</span>
      <div className="ml-[20px]"><TextIcon /></div>
      <Dd cls="ml-[9px]" />
      <div className="ml-[16px]"><LockIcon /></div>
      <Grip cls="ml-[11px]" />
      <div className="ml-[5px] w-[207px] h-[44px] bg-[#2d2d2d] border-[3px] border-[#636669] flex items-center justify-center pr-[9px] text-[25px] text-[#cfcfcf] shrink-0">Auto</div>
      <div className="ml-[8px]"><HistoryIcon /></div>
      <Dd cls="ml-[8px]" />
      <Grip cls="ml-[9px]" />
      <div className="ml-[11px] opacity-80"><Dolphin /></div>
      <span className="ml-[8px] w-[95px] whitespace-nowrap">localhost</span>
      <Dd cls="ml-[12px]" />
      <div className="ml-[17px]"><FileIcon /></div>
      <span className="ml-[7px] w-[78px] whitespace-nowrap">&lt; N/A &gt;</span>
      <Dd cls="ml-[13px]" />
      <Grip cls="ml-[8px]" />
      <div className="ml-[11px]"><GaugeIcon /></div>
      <div className="ml-[15px]"><BoxesIcon /></div>
      <Dd cls="ml-[10px]" />
      <Grip cls="ml-[9px]" />
      <div className="ml-[13px]"><SearchIcon /></div>
      <Dd cls="ml-[10px]" />
      <div className="ml-auto"><SearchIcon w={30} h={30} color="#7f7f7f" fill="none" /></div>
      <Grip cls="ml-[29px]" />
      <Svg w={28} h={28} vb="0 0 28 30" cls="ml-[12px]">
        <path d="M1 4h21v26H1z" fill="#c9e0ee" />
        <path d="M1 4h21v5H1z" fill="#4a86d0" />
        <path d="M1 17h21M11 9v21M1 9v21h21V9" fill="none" stroke="#6d6a58" strokeWidth="2.500" />
        <path d="M20 0l7 7-7 7-7-7z" fill="#c8a016" />
        <path d="M20 3v8M16 7h8" stroke="#fff" strokeWidth="2" />
      </Svg>
      <div className="ml-[15px] w-px h-[44px] bg-[#6b6f72]" />
      <div className="ml-[4px] w-[44px] h-[44px] border-[3px] border-[#6d7174] flex items-center justify-center mr-[7px]">
        <Svg w={31} h={32} vb="0 0 31 34">
          <ellipse cx="15.500" cy="17" rx="15" ry="16.500" fill="#c9bdb2" />
          <path d="M5 30c1-8 5-13 9-15l9-3 7 5c0 9-6 16-14 16-4 0-8-1-11-3z" fill="#4f3d33" />
          <path d="M6 18c2-6 7-9 14-8l-8 4-2 12z" fill="#fff" />
        </Svg>
      </div>
    </div>
  );
}

function StatusBar() {
  const line = 'w-px h-[44px] bg-[#6b6f72] shrink-0';
  return (
    <div className="h-[52px] bg-[#53585b] flex text-[24px] text-[#e8e8e8] shrink-0">
      <div className={`ml-[1471px] ${line}`} />
      <div className="ml-[13px] w-[64px] h-[48px] flex items-center">KST</div>
      <div className={line} />
      <div className="ml-[13px] w-[91px] h-[48px] flex items-center">ko_KR</div>
      <div className={line} />
      <div className={`ml-[307px] ${line}`} />
      <div className={`ml-[294px] ${line}`} />
      <div className={`ml-[292px] ${line}`} />
      <Grip cls="ml-[190px] mt-[11px]" />
    </div>
  );
}

export default function App() {
  return (
    <div className="w-[3606px] h-[2112px] bg-white pl-[111px] pt-[75px] overflow-hidden [font-family:Inter,'Noto_Sans_CJK_KR',sans-serif]">
      <div className="w-[3383px] h-[1889px] rounded-[22px] border border-[#1c1c1c] overflow-hidden flex flex-col bg-[#4c5053] shadow-[0_40px_110px_rgba(0,0,0,0.6)]">
        <div className="h-[57px] bg-gradient-to-b from-[#3b3c3e] to-[#323334] border-b-2 border-[#111] flex items-center shrink-0">
          <div className="ml-[16px] flex gap-[16px]">
            <div className="w-[24px] h-[24px] rounded-full bg-[#ff5f57]" />
            <div className="w-[24px] h-[24px] rounded-full bg-[#febc2e]" />
            <div className="w-[24px] h-[24px] rounded-full bg-[#28c840]" />
          </div>
          <div className="flex-1 text-center pr-[122px] text-[27px] font-semibold text-[#b4b4b4]">DBeaver 22.1.1 - user</div>
        </div>
        <MainToolbar />
        <div className="flex-1 flex min-h-0">
          <div className="w-[498px] ml-[2px] flex flex-col shrink-0 pt-[2px]">
            <DatabasePane />
            <ProjectPane />
          </div>
          <div className="w-[14px] shrink-0" />
          <EditorPane />
        </div>
        <StatusBar />
      </div>
    </div>
  );
}
